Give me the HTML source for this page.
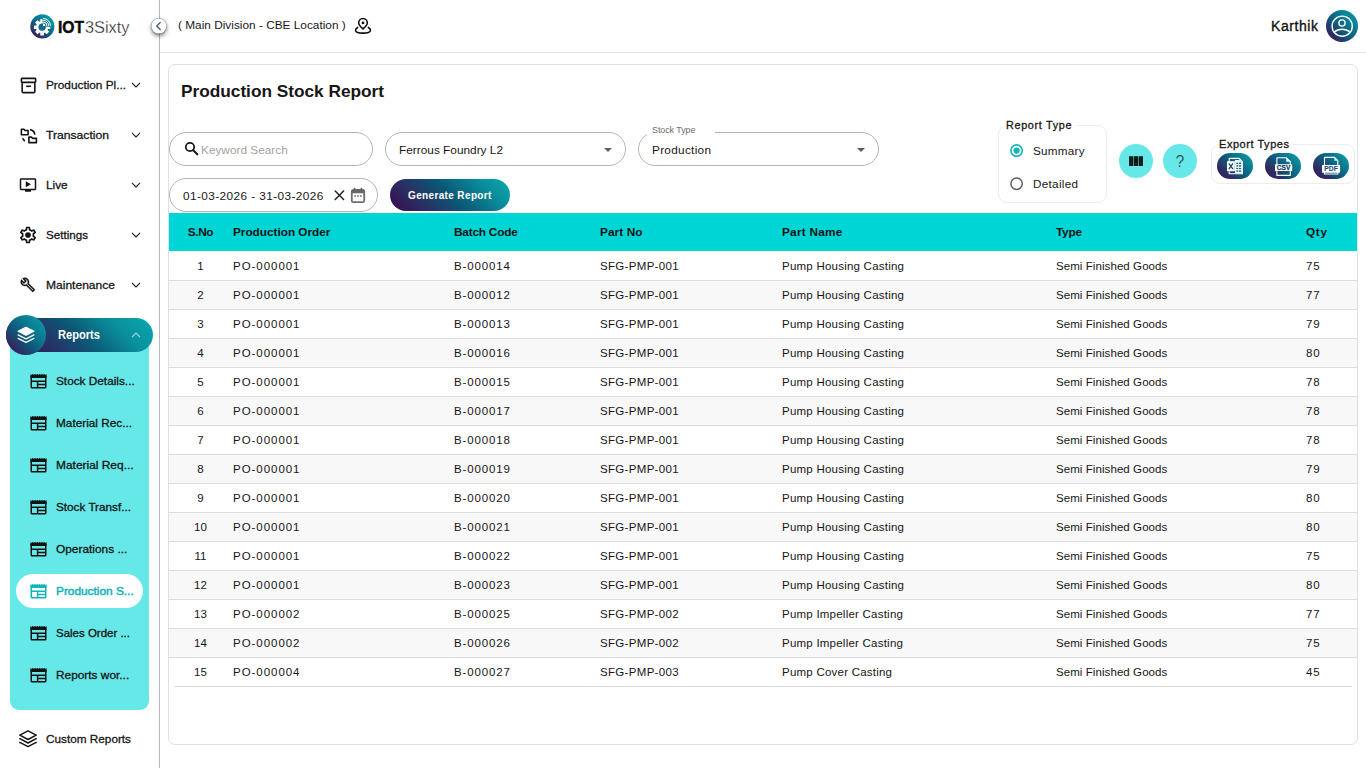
<!DOCTYPE html>
<html lang="en">
<head>
<meta charset="utf-8">
<title>Production Stock Report</title>
<style>
*{box-sizing:border-box;margin:0;padding:0}
html,body{width:1366px;height:768px;overflow:hidden;background:#fff}
body{font-family:"Liberation Sans",sans-serif;color:#1a1a1a;position:relative}
.abs{position:absolute}
.t{position:absolute;white-space:nowrap;line-height:1;transform-origin:0 50%}
svg{display:block}
/* ---------- sidebar ---------- */
#side{position:absolute;left:0;top:0;width:160px;height:768px;border-right:1px solid #b9b9b9;background:#fff}
.mi{position:absolute;left:0;width:159px;height:34px}
.mi .ic{position:absolute;left:19px;top:8px;width:18px;height:18px}
.mi .lb{position:absolute;left:46px;top:10px;font-size:13px;line-height:14px;white-space:nowrap;color:#161616;-webkit-text-stroke:.3px #161616}
.mi .ch{position:absolute;left:131px;top:12px;width:10px;height:10px}
#panel{position:absolute;left:10px;top:335px;width:139px;height:375px;background:#67e8e8;border-radius:0 0 9px 9px}
.si{position:absolute;left:16px;width:127px;height:34px;border-radius:17px}
.si .ic{position:absolute;left:13.800px;top:9px;width:17px;height:16px}
.si .lb{position:absolute;left:40px;top:10px;font-size:13px;line-height:14px;white-space:nowrap;color:#121212;-webkit-text-stroke:.3px #121212}
.si.act{background:#fff}
.si.act .lb{color:#10b6ba;-webkit-text-stroke:.5px #10b6ba}
#rep{position:absolute;left:6px;top:318px;width:147px;height:34px;border-radius:17px;background:linear-gradient(45deg,#3d0a4c 0%,#253568 30%,#0b5876 50%,#0a8f9c 75%,#0aa9b0 100%)}
#repc{position:absolute;left:6px;top:315px;width:40px;height:40px;border-radius:50%;background:linear-gradient(225deg,#0aa5ac 0%,#0a8094 30%,#10587b 58%,#2f2a62 80%,#3f1555 100%)}
/* ---------- header ---------- */
#hdr{position:absolute;left:160px;top:0;width:1206px;height:53px;border-bottom:1px solid #e4e4e4}
#col{position:absolute;left:151px;top:18px;transform:translate(.4px,.6px);width:15px;height:15px;border-radius:50%;background:#fff;box-shadow:0 2.500px 4px rgba(0,0,0,.5),0 0 1.500px rgba(0,0,0,.75)}
#ava{position:absolute;left:1326px;top:10px;width:32px;height:32px;border-radius:50%;background:linear-gradient(225deg,#07a2aa 0%,#0a8094 30%,#10587b 58%,#2f2a62 80%,#3f1555 100%)}
/* ---------- card ---------- */
#card{position:absolute;left:168px;top:64px;width:1190px;height:681px;border:1px solid #e0e0e0;border-radius:7px;background:#fff}

/* ---------- filters ---------- */
.fld{position:absolute;height:34px;border:1px solid #b5b5b5;border-radius:17px;background:#fff}
.caret{position:absolute;width:0;height:0;border-left:4.100px solid transparent;border-right:4.100px solid transparent;border-top:4.500px solid #5c5c5c}
#gen{position:absolute;left:390px;top:179px;width:120px;height:32px;border-radius:16px;background:linear-gradient(45deg,#3d0a4c 0%,#2a2e62 25%,#0b5875 50%,#0a8f9c 80%,#0aa9b0 100%)}
.fs{position:absolute;border:1px solid #ececec;border-radius:9px}
.radio{position:absolute;width:13px;height:13px;border-radius:50%;border:1.800px solid #5e5e5e;background:#fff}
.radio.on{border-color:#10b6b8}
.radio.on:after{content:"";position:absolute;left:1.300px;top:1.300px;width:6.800px;height:6.800px;border-radius:50%;background:#10b6b8}
.cbtn{position:absolute;width:34px;height:34px;border-radius:50%;background:#67e8e8}
.xbtn{position:absolute;top:153px;width:36px;height:26px;border-radius:13px;background:linear-gradient(45deg,#3f1555 0%,#2f2a62 22%,#10587b 48%,#0a8094 74%,#07a2aa 100%)}

/* ---------- table ---------- */
#tbl{position:absolute;left:169px;top:213px;width:1188px;border-collapse:collapse;table-layout:fixed;font-size:11.800px}
#tbl th{height:38px;background:#00d5d5;text-align:left;font-weight:700;color:#0d1414;padding:0 0 0 10px;white-space:nowrap}
#tbl td{height:29px;font-size:11.500px;padding:0 0 0 10px;color:#161616;white-space:nowrap;border-bottom:1px solid #dcdcdc}
#tbl tr:nth-child(even) td{background:#f8f8f8}
#tbl th.c1,#tbl td.c1{text-align:center;padding:0 0 0 9px}
#tbl tr.last td{border-bottom:none}
#lastln{position:absolute;left:174px;top:686px;width:1178px;height:1px;background:#dcdcdc}
/*FIT*/
#lgA{font-size:17.2px!important;display:inline-block;transform-origin:0 50%;transform:scaleX(0.9108);top:19.00px!important}
#lgB{font-size:17.2px!important;display:inline-block;transform-origin:0 50%;transform:scaleX(0.9506);top:19.00px!important}
#L1{font-size:11.8px!important;display:inline-block;transform-origin:0 50%;transform:scaleX(1.0000)}
#L2{font-size:11.8px!important;display:inline-block;transform-origin:0 50%;transform:scaleX(1.0294)}
#L3{font-size:11.8px!important;display:inline-block;transform-origin:0 50%;transform:scaleX(0.9974)}
#L4{font-size:11.8px!important;display:inline-block;transform-origin:0 50%;transform:scaleX(0.9850)}
#L5{font-size:11.8px!important;display:inline-block;transform-origin:0 50%;transform:scaleX(1.0213)}
#L6{font-size:11.8px!important;display:inline-block;transform-origin:0 50%;transform:scaleX(1.0002)}
#L7{font-size:11.8px!important;display:inline-block;transform-origin:0 50%;transform:scaleX(0.9994)}
#L8{font-size:11.8px!important;display:inline-block;transform-origin:0 50%;transform:scaleX(1.0115)}
#L9{font-size:11.8px!important;display:inline-block;transform-origin:0 50%;transform:scaleX(0.9946)}
#L10{font-size:11.8px!important;display:inline-block;transform-origin:0 50%;transform:scaleX(1.0067)}
#L11{font-size:11.8px!important;display:inline-block;transform-origin:0 50%;transform:scaleX(1.0040)}
#L12{font-size:11.8px!important;display:inline-block;transform-origin:0 50%;transform:scaleX(0.9729)}
#L13{font-size:11.8px!important;display:inline-block;transform-origin:0 50%;transform:scaleX(1.0058)}
#L14{font-size:11.8px!important;display:inline-block;transform-origin:0 50%;transform:scaleX(0.9973)}
#repT{font-size:12px!important;display:inline-block;transform-origin:0 50%;transform:scaleX(0.9263);top:329.00px!important}
#hLoc{font-size:11.8px!important;letter-spacing:0.017px;top:20.00px!important}
#hUser{font-size:14px!important;letter-spacing:0.570px;top:19.00px!important}
#title{font-size:17.3px!important;letter-spacing:-0.025px;top:83.00px!important}
#fKey{font-size:11.8px!important;letter-spacing:0.011px;top:145.00px!important}
#fFer{font-size:11.8px!important;letter-spacing:0.023px;top:145.00px!important}
#fPro{font-size:11.8px!important;letter-spacing:0.288px;top:145.00px!important}
#fStL{font-size:8.9px!important;letter-spacing:-0.039px;top:126.00px!important}
#fDate{font-size:11.8px!important;letter-spacing:0.415px;top:191.00px!important}
#fGen{font-size:10px!important;letter-spacing:0.360px;top:191.00px!important}
#rT{font-size:10.8px!important;letter-spacing:0.688px;top:120.00px!important}
#rS{font-size:11.7px!important;letter-spacing:0.247px;top:145.00px!important}
#rD{font-size:11.7px!important;letter-spacing:0.301px;top:178.00px!important}
#eT{font-size:11px!important;letter-spacing:0.545px;top:139.00px!important}
#qM{font-size:15.8px!important;letter-spacing:-0.297px;top:154.00px!important}
#tbl th.c1 span{letter-spacing:-0.392px}
#tbl th.c2 span{letter-spacing:-0.018px}
#tbl th.c3 span{letter-spacing:-0.205px}
#tbl th.c4 span{letter-spacing:0.091px}
#tbl th.c5 span{letter-spacing:0.255px}
#tbl th.c6 span{letter-spacing:-0.224px}
#tbl th.c7 span{letter-spacing:0.664px}
#tbl td.c2 span{letter-spacing:0.959px}
#tbl td.c3 span{letter-spacing:0.846px}
#tbl td.c4 span{letter-spacing:0.318px}
#tbl td.c5 span{letter-spacing:0.230px}
#tbl td.c6 span{letter-spacing:0.075px}
#tbl td.c7 span{letter-spacing:0.903px}
/*ENDFIT*/
#tbl td span{position:relative}
#tbl tbody tr:first-child td span{top:1px}
</style>
</head>
<body>
<!-- SIDEBAR -->
<div id="side">
  <svg class="abs" style="left:30px;top:13.500px" width="25" height="25" viewBox="0 0 25 25">
    <defs><linearGradient id="lg1" x1=".85" y1=".1" x2=".2" y2=".95"><stop offset="0" stop-color="#04a0a8"/><stop offset=".5" stop-color="#0d6884"/><stop offset="1" stop-color="#3d1a56"/></linearGradient>
    <clipPath id="gcl"><path d="M0 0H12.500V12.800H25V25H0z"/></clipPath></defs>
    <circle cx="12.350" cy="12.400" r="12.050" fill="url(#lg1)"/>
    <g transform="translate(12.100 13.200)">
      <g fill="#fff" clip-path="url(#gcl)" transform="translate(-12.100 -13.200)"><g transform="translate(12.100 13.200)">
        <circle r="6.100"/>
        <rect x="-1.800" y="-8.200" width="3.600" height="16.400" rx=".5"/>
        <rect x="-1.800" y="-8.200" width="3.600" height="16.400" rx=".5" transform="rotate(45)"/>
        <rect x="-1.800" y="-8.200" width="3.600" height="16.400" rx=".5" transform="rotate(90)"/>
        <rect x="-1.800" y="-8.200" width="3.600" height="16.400" rx=".5" transform="rotate(135)"/>
      </g></g>
      <circle r="3.600" fill="#0e6a86"/>
      <g transform="translate(.9 -1.300)" fill="none" stroke="#fff" stroke-width="1" stroke-linecap="butt">
        <path d="M0 0V-2.300A2.300 2.300 0 0 1 2.300 0z" fill="#fff" stroke="none"/>
        <path d="M0 -3.900A3.900 3.900 0 0 1 3.900 0"/>
        <path d="M0 -5.700A5.700 5.700 0 0 1 5.700 0"/>
        <path d="M0 -7.500A7.500 7.500 0 0 1 7.500 0"/>
      </g>
    </g>
  </svg>
  <span class="t" id="lgA" style="left:57.600px;top:17px;font-size:18px;font-weight:700;color:#0c0c0c;-webkit-text-stroke:.5px #0c0c0c">IOT</span>
  <span class="t" id="lgB" style="left:85px;top:17px;font-size:18px;color:#1c1c1c;-webkit-text-stroke:.3px #fff">3Sixty</span>
  <div class="mi" style="top:68px"><svg class="ic" viewBox="0 0 24 24" style="left:18.500px;top:7.500px;width:19px;height:19px"><path fill="#141414" d="M20 2H4c-1 0-2 .9-2 2v3.01c0 .72.43 1.34 1 1.69V20c0 1.1 1.1 2 2 2h14c.9 0 2-.9 2-2V8.7c.57-.35 1-.97 1-1.69V4c0-1.1-1-2-2-2zm-1 18H5V9h14v11zm1-13H4V4h16v3z"/><path fill="#141414" d="M9 12h6v2H9z"/></svg><span class="lb" id="L1">Production Pl...</span><svg class="ch" viewBox="0 0 10 10"><path d="M1.2 3.2 L5 7 L8.8 3.2" fill="none" stroke="#262626" stroke-width="1.100" stroke-linecap="round" stroke-linejoin="round"/></svg></div>
  <div class="mi" style="top:118px"><svg class="ic" viewBox="0 0 24 24" style="left:18.500px;top:7.500px;width:19px;height:19px"><g fill="none" stroke="#141414" stroke-width="2" stroke-linejoin="round"><path d="M3 4h3.2l1.4 1.6H11.5V11H3z"/><path d="M12.5 14h3.2l1.4 1.6H22V21h-9.500z"/><path d="M14 4.6c3.4.6 5.6 2.9 6 6.4" stroke-linecap="butt"/><path d="M4.6 15.4c.5 1.5 1.500 2.700 2.900 3.500" stroke-linecap="butt"/></g></svg><span class="lb" id="L2">Transaction</span><svg class="ch" viewBox="0 0 10 10"><path d="M1.2 3.2 L5 7 L8.8 3.2" fill="none" stroke="#262626" stroke-width="1.100" stroke-linecap="round" stroke-linejoin="round"/></svg></div>
  <div class="mi" style="top:168px"><svg class="ic" viewBox="0 0 24 24" style="left:19px;top:8.200px;width:18px;height:18px"><path fill="#141414" d="M9 7v8l7-4z"/><path fill="#141414" d="M21 3H3c-1.100 0-2 .9-2 2v12c0 1.100.9 2 2 2h5v2h8v-2h5c1.100 0 1.990-.9 1.990-2L23 5c0-1.100-.9-2-2-2zm0 14H3V5h18v12z"/></svg><span class="lb" id="L3">Live</span><svg class="ch" viewBox="0 0 10 10"><path d="M1.2 3.2 L5 7 L8.8 3.2" fill="none" stroke="#262626" stroke-width="1.100" stroke-linecap="round" stroke-linejoin="round"/></svg></div>
  <div class="mi" style="top:218px"><svg class="ic" viewBox="0 0 24 24" style="left:18px;top:7px;width:20px;height:20px"><path fill="#141414" d="M19.430 12.980c.040-.320.070-.640.070-.980s-.030-.660-.070-.980l2.110-1.650c.190-.150.240-.420.120-.640l-2-3.460c-.090-.160-.260-.250-.440-.250-.060 0-.120.010-.170.030l-2.490 1c-.520-.400-1.080-.730-1.690-.980l-.380-2.650C14.460 2.180 14.250 2 14 2h-4c-.250 0-.460.180-.490.420l-.380 2.650c-.610.250-1.170.590-1.690.980l-2.490-1c-.060-.020-.120-.030-.180-.030-.170 0-.340.090-.430.250l-2 3.460c-.130.220-.070.490.12.640l2.110 1.650c-.040.320-.070.650-.070.980s.030.660.070.980l-2.110 1.650c-.190.150-.240.420-.120.640l2 3.460c.090.160.260.250.440.250.060 0 .12-.010.170-.030l2.490-1c.520.400 1.080.730 1.690.980l.380 2.650c.030.240.240.420.490.420h4c.250 0 .460-.180.490-.420l.380-2.650c.610-.250 1.170-.590 1.690-.980l2.490 1c.060.020.120.030.180.030.170 0 .340-.090.430-.250l2-3.460c.120-.220.070-.490-.12-.640l-2.110-1.650zm-1.980-1.710c.040.310.050.520.050.730 0 .210-.020.430-.050.730l-.140 1.130.89.700 1.080.840-.7 1.210-1.270-.510-1.040-.420-.9.680c-.430.320-.840.560-1.250.730l-1.060.430-.160 1.130-.200 1.350h-1.400l-.190-1.350-.160-1.130-1.060-.430c-.430-.180-.830-.410-1.230-.710l-.910-.7-1.060.430-1.270.510-.7-1.210 1.080-.840.890-.7-.140-1.130c-.030-.310-.050-.540-.050-.740s.020-.430.050-.730l.140-1.130-.89-.7-1.080-.840.7-1.210 1.270.510 1.040.420.900-.680c.430-.320.840-.560 1.250-.730l1.060-.430.160-1.130.2-1.350h1.390l.19 1.350.16 1.130 1.060.430c.430.180.830.410 1.230.710l.91.7 1.060-.430 1.270-.510.7 1.210-1.070.850-.89.700.14 1.130z"/><circle cx="12" cy="12" r="3.400" fill="#141414"/></svg><span class="lb" id="L4">Settings</span><svg class="ch" viewBox="0 0 10 10"><path d="M1.2 3.2 L5 7 L8.8 3.2" fill="none" stroke="#262626" stroke-width="1.100" stroke-linecap="round" stroke-linejoin="round"/></svg></div>
  <div class="mi" style="top:268px"><svg class="ic" viewBox="0 0 24 24" style="left:19.800px;top:9.300px;width:15.600px;height:15.600px"><path fill="#141414" stroke="#141414" stroke-width=".5" d="M22.610 18.990l-9.080-9.080c.930-2.340.450-5.100-1.440-7C9.790.61 6.210.4 3.660 2.260L7.500 6.110 6.080 7.520 2.250 3.690C.39 6.230.6 9.820 2.900 12.110c1.860 1.860 4.570 2.350 6.890 1.480l9.110 9.110c.390.390 1.020.390 1.410 0l2.300-2.300c.4-.380.4-1.010 0-1.410zm-3 1.600l-9.460-9.460c-.610.450-1.290.720-2 .820-1.360.2-2.790-.210-3.830-1.250C3.370 9.760 2.930 8.500 3 7.260l3.090 3.090 4.240-4.240-3.090-3.090c1.240-.070 2.490.370 3.440 1.310 1.080 1.080 1.490 2.570 1.240 3.960-.120.710-.420 1.370-.880 1.960l9.450 9.450-.880.890z"/></svg><span class="lb" id="L5">Maintenance</span><svg class="ch" viewBox="0 0 10 10"><path d="M1.2 3.2 L5 7 L8.8 3.2" fill="none" stroke="#262626" stroke-width="1.100" stroke-linecap="round" stroke-linejoin="round"/></svg></div>
  <div id="panel"></div>
  <div id="rep"></div><div id="repc"></div>
  <svg class="abs" style="left:16.400px;top:325.200px" width="20" height="20" viewBox="0 0 20 20"><g stroke="#fff" stroke-width="1.200" stroke-linejoin="round" stroke-linecap="round"><path d="M10 2.300L17.900 6.300 10 10.300 2.100 6.300z" fill="#fff"/><path d="M2.100 9.900L10 13.900 17.900 9.900" fill="none"/><path d="M2.100 13.400L10 17.400 17.900 13.400" fill="none"/></g></svg>
  <span class="t" id="repT" style="left:58px;top:328px;font-size:13px;font-weight:700;color:#fff">Reports</span>
  <svg class="abs" style="left:131px;top:330px" width="10" height="10" viewBox="0 0 10 10"><path d="M1.200 6.800 L5 3 L8.800 6.800" fill="none" stroke="#9fd3da" stroke-width="1.100" stroke-linecap="round" stroke-linejoin="round"/></svg>
  <div class="si" style="top:364px"><svg class="ic" viewBox="0 0 17 16"><g fill="none" stroke="#121212" stroke-width="1.500"><rect x="1.250" y="2.600" width="14.500" height="12.200" rx=".8"/><path d="M1.250 8.200H15.750M7.600 8.200V14.800M7.600 11.500H15.750"/></g><path fill="#121212" d="M.5 1.100l1.100.9 1.150-.9 1.150.9 1.150-.9 1.150.9 1.150-.9 1.150.9 1.150-.9 1.150.9 1.150-.9 1.150.9 1.150-.9 1.150.9 1.100-.9V5.100H.5z"/></svg><span class="lb" id="L6">Stock Details...</span></div>
  <div class="si" style="top:406px"><svg class="ic" viewBox="0 0 17 16"><g fill="none" stroke="#121212" stroke-width="1.500"><rect x="1.250" y="2.600" width="14.500" height="12.200" rx=".8"/><path d="M1.250 8.200H15.750M7.600 8.200V14.800M7.600 11.500H15.750"/></g><path fill="#121212" d="M.5 1.100l1.100.9 1.150-.9 1.150.9 1.150-.9 1.150.9 1.150-.9 1.150.9 1.150-.9 1.150.9 1.150-.9 1.150.9 1.150-.9 1.150.9 1.100-.9V5.100H.5z"/></svg><span class="lb" id="L7">Material Rec...</span></div>
  <div class="si" style="top:448px"><svg class="ic" viewBox="0 0 17 16"><g fill="none" stroke="#121212" stroke-width="1.500"><rect x="1.250" y="2.600" width="14.500" height="12.200" rx=".8"/><path d="M1.250 8.200H15.750M7.600 8.200V14.800M7.600 11.500H15.750"/></g><path fill="#121212" d="M.5 1.100l1.100.9 1.150-.9 1.150.9 1.150-.9 1.150.9 1.150-.9 1.150.9 1.150-.9 1.150.9 1.150-.9 1.150.9 1.150-.9 1.150.9 1.100-.9V5.100H.5z"/></svg><span class="lb" id="L8">Material Req...</span></div>
  <div class="si" style="top:490px"><svg class="ic" viewBox="0 0 17 16"><g fill="none" stroke="#121212" stroke-width="1.500"><rect x="1.250" y="2.600" width="14.500" height="12.200" rx=".8"/><path d="M1.250 8.200H15.750M7.600 8.200V14.800M7.600 11.500H15.750"/></g><path fill="#121212" d="M.5 1.100l1.100.9 1.150-.9 1.150.9 1.150-.9 1.150.9 1.150-.9 1.150.9 1.150-.9 1.150.9 1.150-.9 1.150.9 1.150-.9 1.150.9 1.100-.9V5.100H.5z"/></svg><span class="lb" id="L9">Stock Transf...</span></div>
  <div class="si" style="top:532px"><svg class="ic" viewBox="0 0 17 16"><g fill="none" stroke="#121212" stroke-width="1.500"><rect x="1.250" y="2.600" width="14.500" height="12.200" rx=".8"/><path d="M1.250 8.200H15.750M7.600 8.200V14.800M7.600 11.500H15.750"/></g><path fill="#121212" d="M.5 1.100l1.100.9 1.150-.9 1.150.9 1.150-.9 1.150.9 1.150-.9 1.150.9 1.150-.9 1.150.9 1.150-.9 1.150.9 1.150-.9 1.150.9 1.100-.9V5.100H.5z"/></svg><span class="lb" id="L10">Operations ...</span></div>
  <div class="si act" style="top:574px"><svg class="ic" viewBox="0 0 17 16"><g fill="none" stroke="#10b6ba" stroke-width="1.500"><rect x="1.250" y="2.600" width="14.500" height="12.200" rx=".8"/><path d="M1.250 8.200H15.750M7.600 8.200V14.800M7.600 11.500H15.750"/></g><path fill="#10b6ba" d="M.5 1.100l1.100.9 1.150-.9 1.150.9 1.150-.9 1.150.9 1.150-.9 1.150.9 1.150-.9 1.150.9 1.150-.9 1.150.9 1.150-.9 1.150.9 1.100-.9V5.100H.5z"/></svg><span class="lb" id="L11">Production S...</span></div>
  <div class="si" style="top:616px"><svg class="ic" viewBox="0 0 17 16"><g fill="none" stroke="#121212" stroke-width="1.500"><rect x="1.250" y="2.600" width="14.500" height="12.200" rx=".8"/><path d="M1.250 8.200H15.750M7.600 8.200V14.800M7.600 11.500H15.750"/></g><path fill="#121212" d="M.5 1.100l1.100.9 1.150-.9 1.150.9 1.150-.9 1.150.9 1.150-.9 1.150.9 1.150-.9 1.150.9 1.150-.9 1.150.9 1.150-.9 1.150.9 1.100-.9V5.100H.5z"/></svg><span class="lb" id="L12">Sales Order ...</span></div>
  <div class="si" style="top:658px"><svg class="ic" viewBox="0 0 17 16"><g fill="none" stroke="#121212" stroke-width="1.500"><rect x="1.250" y="2.600" width="14.500" height="12.200" rx=".8"/><path d="M1.250 8.200H15.750M7.600 8.200V14.800M7.600 11.500H15.750"/></g><path fill="#121212" d="M.5 1.100l1.100.9 1.150-.9 1.150.9 1.150-.9 1.150.9 1.150-.9 1.150.9 1.150-.9 1.150.9 1.150-.9 1.150.9 1.150-.9 1.150.9 1.100-.9V5.100H.5z"/></svg><span class="lb" id="L13">Reports wor...</span></div>
  <div class="mi" style="top:722px"><svg class="ic" viewBox="0 0 20 20" style="left:18px;top:7px;width:20px;height:20px"><g fill="none" stroke="#141414" stroke-width="1.500" stroke-linejoin="round" stroke-linecap="round"><path d="M10 1.900L18.200 6.200 10 10.500 1.800 6.200z"/><path d="M1.800 9.700L10 14 18.200 9.700"/><path d="M1.800 13.300L10 17.600 18.200 13.300"/></g></svg><span class="lb" id="L14">Custom Reports</span></div>
</div>
<!-- HEADER -->
<div id="hdr"></div>
<div id="col"><svg width="15" height="15" viewBox="0 0 15 15"><path d="M8.800 4 L5.300 7.500 L8.800 11" fill="none" stroke="#446079" stroke-width="1.400" stroke-linecap="round" stroke-linejoin="round"/></svg></div>
<span class="t" id="hLoc" style="left:178px;top:18px;font-size:13px;color:#171717">( Main Division - CBE Location )</span>
<svg class="abs" style="left:354px;top:17px" width="18" height="18" viewBox="0 0 24 24"><g fill="none" stroke="#0c0c0c" stroke-width="2.100"><path d="M12 15.900C8.200 12.300 6.200 10 6.200 7.900A5.800 5.800 0 0 1 17.800 7.900C17.800 10 15.800 12.300 12 15.900z" stroke-linejoin="round"/><path d="M4.900 13.900C3 14.800 2 16.100 2 17.600 2 19.900 6.400 21.500 12 21.500S22 19.900 22 17.600C22 16.100 21 14.800 19.100 13.900" stroke-linecap="round"/></g><circle cx="12" cy="7.900" r="1.800" fill="#0c0c0c"/></svg>
<span class="t" id="hUser" style="left:1271px;top:18px;font-size:15px;color:#111;-webkit-text-stroke:.35px #111">Karthik</span>
<div id="ava"><svg width="32" height="32" viewBox="0 0 32 32"><g fill="none" stroke="#fff" stroke-width="1.400"><circle cx="16.200" cy="16.200" r="10.100"/><circle cx="16" cy="13" r="3.100"/><path d="M8 22.200c2.300-2 5-3 8.100-3s5.900 1 8.200 3"/></g></svg></div>
<!-- CARD -->
<div id="card"></div>
<span class="t" id="title" style="left:181px;top:81px;font-size:20px;font-weight:700;color:#161616">Production Stock Report</span>
<div class="fld" style="left:169px;top:132px;width:204px"></div>
<svg class="abs" style="left:184px;top:141px" width="15" height="15" viewBox="0 0 15 15"><circle cx="6" cy="6" r="4.200" fill="none" stroke="#1a1a1a" stroke-width="1.800"/><path d="M9.200 9.200 L13.300 13.300" stroke="#1a1a1a" stroke-width="2.100" stroke-linecap="round"/></svg>
<span class="t" id="fKey" style="left:201px;top:143px;font-size:13px;color:#a2a2a2">Keyword Search</span>
<div class="fld" style="left:385px;top:132px;width:241px"></div>
<span class="t" id="fFer" style="left:399px;top:143px;font-size:13px;color:#171717">Ferrous Foundry L2</span>
<div class="caret" style="left:603.900px;top:147.700px"></div>
<div class="fld" style="left:638px;top:132px;width:241px"></div>
<div class="abs" style="left:647px;top:130px;width:68px;height:5px;background:#fff"></div>
<span class="t" id="fStL" style="left:652px;top:125px;font-size:9.500px;color:#6c6c6c">Stock Type</span>
<span class="t" id="fPro" style="left:652px;top:143px;font-size:13px;color:#171717">Production</span>
<div class="caret" style="left:856.900px;top:147.700px"></div>
<div class="fld" style="left:169px;top:178px;width:209px"></div>
<span class="t" id="fDate" style="left:183px;top:189px;font-size:13px;color:#171717">01-03-2026 - 31-03-2026</span>
<svg class="abs" style="left:333px;top:189px" width="12" height="12" viewBox="0 0 12 12"><path d="M2.200 2 L10.600 10.600 M10.600 2 L2.200 10.600" stroke="#222" stroke-width="1.450" stroke-linecap="round"/></svg>
<svg class="abs" style="left:350px;top:186.500px" width="16" height="17" viewBox="0 0 16 17"><rect x="1.800" y="3" width="12.400" height="12.200" rx="1.400" fill="none" stroke="#6e6e6e" stroke-width="1.800"/><path d="M1.600 3.800a1 1 0 0 1 1-1h10.800a1 1 0 0 1 1 1V6.200H1.600z" fill="#666"/><path d="M4.600 .8V3.500M11.400 .8V3.500" stroke="#666" stroke-width="1.500"/><path d="M4.300 9h1.600M7.200 9h1.600M10.100 9h1.600" stroke="#666" stroke-width="1.500"/></svg>
<div id="gen"></div>
<span class="t" id="fGen" style="left:408px;top:190px;font-size:11px;font-weight:700;color:#fff">Generate Report</span>
<!-- report type -->
<div class="fs" style="left:998px;top:125px;width:109px;height:78px"></div>
<div class="abs" style="left:1003px;top:124px;width:72px;height:4px;background:#fff"></div>
<span class="t" id="rT" style="left:1006px;top:119px;font-size:13px;color:#161616;-webkit-text-stroke:.3px #161616">Report Type</span>
<svg class="abs" style="left:1009px;top:143px" width="15" height="15" viewBox="0 0 15 15"><circle cx="7.600" cy="7.600" r="5.700" fill="#fff" stroke="#10b6ba" stroke-width="1.600"/><circle cx="7.600" cy="7.600" r="3.100" fill="#10b6ba"/></svg>
<span class="t" id="rS" style="left:1033px;top:144px;font-size:13px;color:#171717">Summary</span>
<svg class="abs" style="left:1009px;top:176px" width="15" height="15" viewBox="0 0 15 15"><circle cx="7.600" cy="7.700" r="5.700" fill="#fff" stroke="#5e5e5e" stroke-width="1.500"/></svg>
<span class="t" id="rD" style="left:1033px;top:177px;font-size:13px;color:#171717">Detailed</span>
<div class="cbtn" style="left:1119px;top:144px"><svg width="34" height="34" viewBox="0 0 34 34"><path fill="#0c1a1a" d="M10 12.300h4.300v9.700H10zM14.850 12.300h4.300v9.700h-4.300zM19.700 12.300H24v9.700h-4.300z"/></svg></div>
<div class="cbtn" style="left:1163px;top:144px"></div>
<span class="t" id="qM" style="left:1175.500px;top:152px;font-size:18px;color:#26383a;-webkit-text-stroke:.2px #67e8e8">?</span>
<!-- export types -->
<div class="fs" style="left:1211px;top:144px;width:144px;height:40px"></div>
<div class="abs" style="left:1216px;top:143px;width:76px;height:4px;background:#fff"></div>
<span class="t" id="eT" style="left:1219px;top:138px;font-size:13px;color:#161616;-webkit-text-stroke:.3px #161616">Export Types</span>
<div class="xbtn" style="left:1217px"></div>
<div class="xbtn" style="left:1265px"></div>
<div class="xbtn" style="left:1313px"></div>
<svg class="abs" style="left:1217px;top:153px" width="36" height="26" viewBox="0 0 36 26">
  <path d="M12.200 5.400H22.300L25.400 8.600V20.800H12.200z" fill="none" stroke="#fff" stroke-width="1.100" stroke-linejoin="round"/>
  <path d="M18 6.900h4.400l2.600 2.600V20.300H18z" fill="#fff"/>
  <path d="M22.200 5.400v3.300h3.200z" fill="#cfe8ec"/>
  <g fill="#0f6a85"><rect x="19.300" y="9.600" width="2" height="1.400"/><rect x="22" y="9.600" width="2.200" height="1.400"/><rect x="19.300" y="12.200" width="2" height="1.400"/><rect x="22" y="12.200" width="2.200" height="1.400"/><rect x="19.300" y="14.800" width="2" height="1.400"/><rect x="22" y="14.800" width="2.200" height="1.400"/><rect x="19.300" y="17.400" width="2" height="1.400"/><rect x="22" y="17.400" width="2.200" height="1.400"/></g>
  <rect x="10" y="8.200" width="7.800" height="10" fill="#fff"/>
  <path d="M11.800 10.300l4.200 5.800M16 10.300l-4.200 5.800" stroke="#1c4569" stroke-width="1.300" fill="none"/>
</svg>
<svg class="abs" style="left:1265px;top:153px" width="36" height="26" viewBox="0 0 36 26">
  <path d="M11.900 4.800H21.500L25.300 8.600V22.400H11.900z" fill="none" stroke="#fff" stroke-width="1.100" stroke-linejoin="round"/>
  <path d="M21.300 4.800v4h4z" fill="#fff"/>
  <rect x="10" y="11.200" width="17.200" height="6.900" rx=".6" fill="#fff"/>
  <text x="18.600" y="17" font-family="Liberation Sans, sans-serif" font-size="6.600" font-weight="700" fill="#173b60" stroke="#173b60" stroke-width=".25" text-anchor="middle" textLength="13.500" lengthAdjust="spacingAndGlyphs">CSV</text>
</svg>
<svg class="abs" style="left:1313px;top:153px" width="36" height="26" viewBox="0 0 36 26">
  <path d="M11.500 4.400H21.600L24.800 7.600V21H11.500z" fill="none" stroke="#fff" stroke-width="1.100" stroke-linejoin="round"/>
  <path d="M21.400 4.400v3.400h3.400z" fill="#cfe8ec"/>
  <rect x="9" y="12.100" width="18.100" height="7.600" rx=".6" fill="#fff"/>
  <text x="18.100" y="18.200" font-family="Liberation Sans, sans-serif" font-size="6.600" font-weight="700" fill="#24507a" stroke="#24507a" stroke-width=".15" text-anchor="middle" textLength="13.500" lengthAdjust="spacingAndGlyphs">PDF</text>
</svg>
<table id="tbl">
<colgroup><col style="width:54px"><col style="width:221px"><col style="width:146px"><col style="width:182px"><col style="width:274px"><col style="width:250px"><col style="width:61px"></colgroup>
<thead><tr><th class="c1"><span>S.No</span></th><th class="c2"><span>Production Order</span></th><th class="c3"><span>Batch Code</span></th><th class="c4"><span>Part No</span></th><th class="c5"><span>Part Name</span></th><th class="c6"><span>Type</span></th><th class="c7"><span>Qty</span></th></tr></thead>
<tbody>
<tr><td class="c1"><span>1</span></td><td class="c2"><span>PO-000001</span></td><td class="c3"><span>B-000014</span></td><td class="c4"><span>SFG-PMP-001</span></td><td class="c5"><span>Pump Housing Casting</span></td><td class="c6"><span>Semi Finished Goods</span></td><td class="c7"><span>75</span></td></tr>
<tr><td class="c1"><span>2</span></td><td class="c2"><span>PO-000001</span></td><td class="c3"><span>B-000012</span></td><td class="c4"><span>SFG-PMP-001</span></td><td class="c5"><span>Pump Housing Casting</span></td><td class="c6"><span>Semi Finished Goods</span></td><td class="c7"><span>77</span></td></tr>
<tr><td class="c1"><span>3</span></td><td class="c2"><span>PO-000001</span></td><td class="c3"><span>B-000013</span></td><td class="c4"><span>SFG-PMP-001</span></td><td class="c5"><span>Pump Housing Casting</span></td><td class="c6"><span>Semi Finished Goods</span></td><td class="c7"><span>79</span></td></tr>
<tr><td class="c1"><span>4</span></td><td class="c2"><span>PO-000001</span></td><td class="c3"><span>B-000016</span></td><td class="c4"><span>SFG-PMP-001</span></td><td class="c5"><span>Pump Housing Casting</span></td><td class="c6"><span>Semi Finished Goods</span></td><td class="c7"><span>80</span></td></tr>
<tr><td class="c1"><span>5</span></td><td class="c2"><span>PO-000001</span></td><td class="c3"><span>B-000015</span></td><td class="c4"><span>SFG-PMP-001</span></td><td class="c5"><span>Pump Housing Casting</span></td><td class="c6"><span>Semi Finished Goods</span></td><td class="c7"><span>78</span></td></tr>
<tr><td class="c1"><span>6</span></td><td class="c2"><span>PO-000001</span></td><td class="c3"><span>B-000017</span></td><td class="c4"><span>SFG-PMP-001</span></td><td class="c5"><span>Pump Housing Casting</span></td><td class="c6"><span>Semi Finished Goods</span></td><td class="c7"><span>78</span></td></tr>
<tr><td class="c1"><span>7</span></td><td class="c2"><span>PO-000001</span></td><td class="c3"><span>B-000018</span></td><td class="c4"><span>SFG-PMP-001</span></td><td class="c5"><span>Pump Housing Casting</span></td><td class="c6"><span>Semi Finished Goods</span></td><td class="c7"><span>78</span></td></tr>
<tr><td class="c1"><span>8</span></td><td class="c2"><span>PO-000001</span></td><td class="c3"><span>B-000019</span></td><td class="c4"><span>SFG-PMP-001</span></td><td class="c5"><span>Pump Housing Casting</span></td><td class="c6"><span>Semi Finished Goods</span></td><td class="c7"><span>79</span></td></tr>
<tr><td class="c1"><span>9</span></td><td class="c2"><span>PO-000001</span></td><td class="c3"><span>B-000020</span></td><td class="c4"><span>SFG-PMP-001</span></td><td class="c5"><span>Pump Housing Casting</span></td><td class="c6"><span>Semi Finished Goods</span></td><td class="c7"><span>80</span></td></tr>
<tr><td class="c1"><span>10</span></td><td class="c2"><span>PO-000001</span></td><td class="c3"><span>B-000021</span></td><td class="c4"><span>SFG-PMP-001</span></td><td class="c5"><span>Pump Housing Casting</span></td><td class="c6"><span>Semi Finished Goods</span></td><td class="c7"><span>80</span></td></tr>
<tr><td class="c1"><span>11</span></td><td class="c2"><span>PO-000001</span></td><td class="c3"><span>B-000022</span></td><td class="c4"><span>SFG-PMP-001</span></td><td class="c5"><span>Pump Housing Casting</span></td><td class="c6"><span>Semi Finished Goods</span></td><td class="c7"><span>75</span></td></tr>
<tr><td class="c1"><span>12</span></td><td class="c2"><span>PO-000001</span></td><td class="c3"><span>B-000023</span></td><td class="c4"><span>SFG-PMP-001</span></td><td class="c5"><span>Pump Housing Casting</span></td><td class="c6"><span>Semi Finished Goods</span></td><td class="c7"><span>80</span></td></tr>
<tr><td class="c1"><span>13</span></td><td class="c2"><span>PO-000002</span></td><td class="c3"><span>B-000025</span></td><td class="c4"><span>SFG-PMP-002</span></td><td class="c5"><span>Pump Impeller Casting</span></td><td class="c6"><span>Semi Finished Goods</span></td><td class="c7"><span>77</span></td></tr>
<tr><td class="c1"><span>14</span></td><td class="c2"><span>PO-000002</span></td><td class="c3"><span>B-000026</span></td><td class="c4"><span>SFG-PMP-002</span></td><td class="c5"><span>Pump Impeller Casting</span></td><td class="c6"><span>Semi Finished Goods</span></td><td class="c7"><span>75</span></td></tr>
<tr class="last"><td class="c1"><span>15</span></td><td class="c2"><span>PO-000004</span></td><td class="c3"><span>B-000027</span></td><td class="c4"><span>SFG-PMP-003</span></td><td class="c5"><span>Pump Cover Casting</span></td><td class="c6"><span>Semi Finished Goods</span></td><td class="c7"><span>45</span></td></tr>
</tbody></table>
<div id="lastln"></div>
</body>
</html>
